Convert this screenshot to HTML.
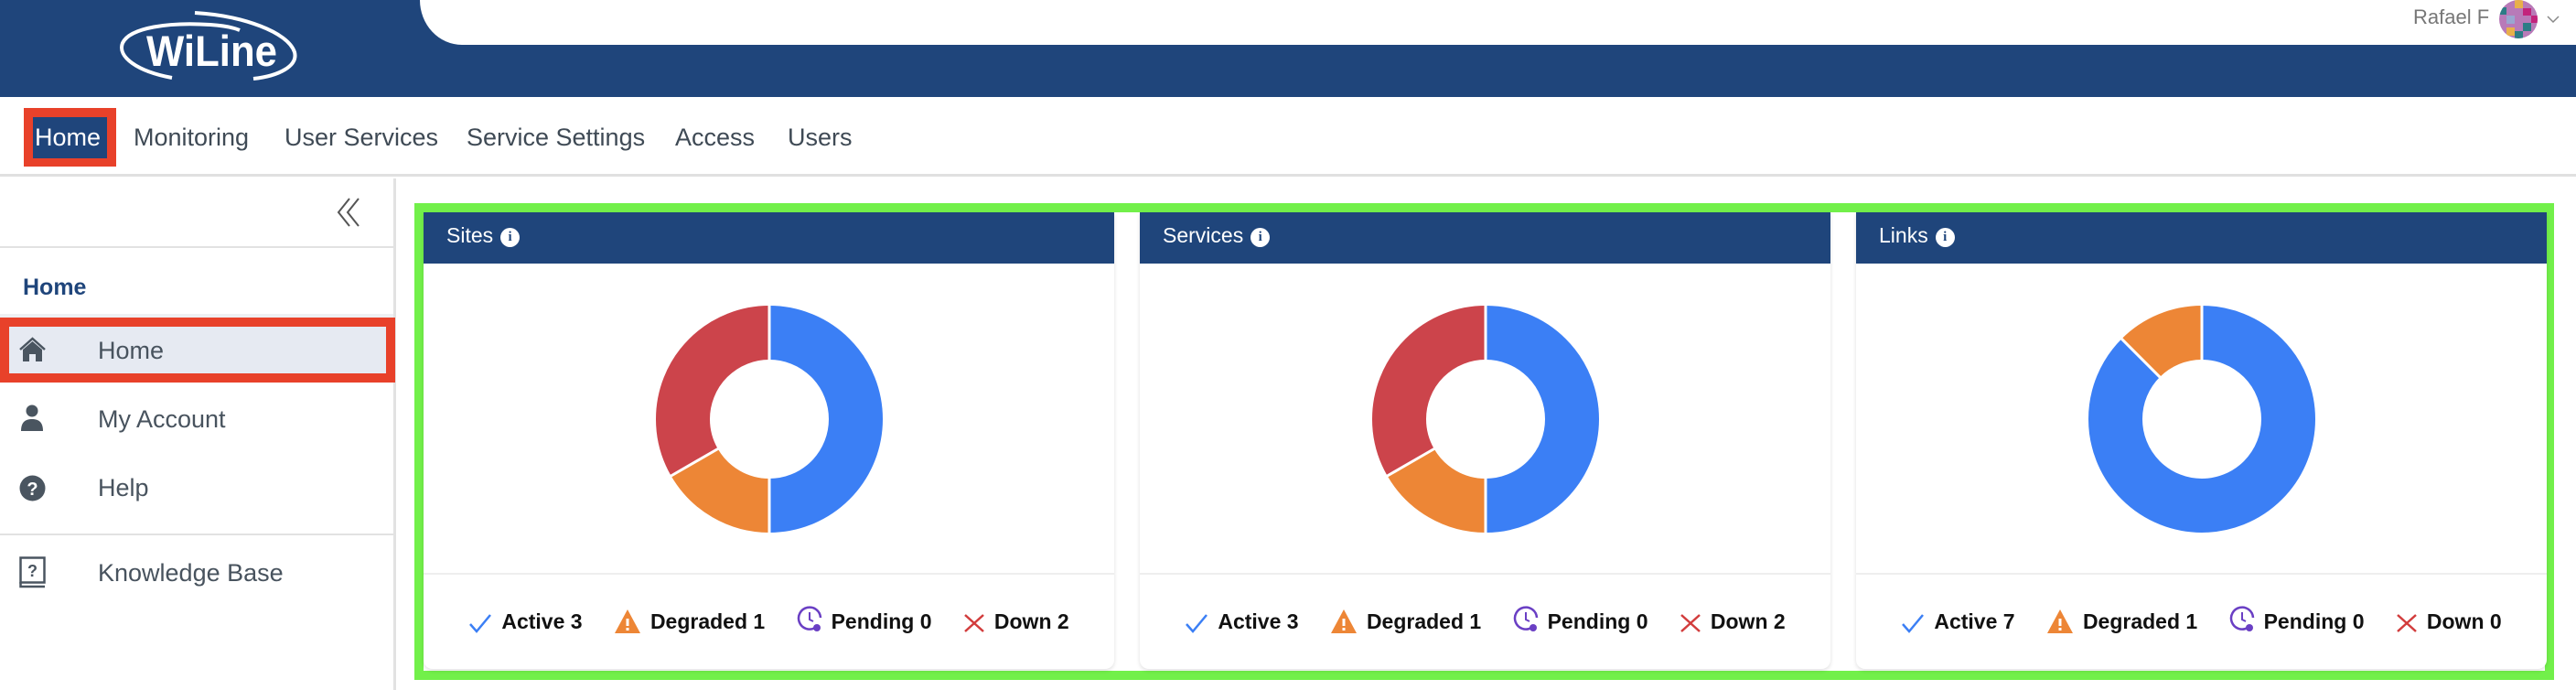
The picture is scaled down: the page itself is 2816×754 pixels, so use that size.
<!DOCTYPE html>
<html><head><meta charset="utf-8"><style>
*{margin:0;padding:0;box-sizing:border-box}
body{width:2816px;height:754px;overflow:hidden;background:#fff;font-family:"Liberation Sans",Arial,sans-serif;position:relative}
.abs{position:absolute}
.hdr{left:0;top:0;width:2816px;height:106px;background:#1f457b}
.notch{left:459px;top:0;width:2357px;height:49px;background:#fff;border-bottom-left-radius:46px 49px}
.nav{left:0;top:106px;width:2816px;height:87px;border-bottom:3px solid #e0e0e0}
.nav span{position:absolute;top:26px;font-size:27px;color:#3f4a55;line-height:36px}
.side{left:0;top:195px;width:433px;height:559px;border-right:3px solid #e2e2e2}
.si{position:absolute;left:107px;font-size:27px;color:#48535e;line-height:32px}
.card{position:absolute;top:232px;width:755px;height:499px;background:#fff;border-radius:0 0 10px 10px;box-shadow:0 2px 5px rgba(0,0,0,.12)}
.ch{height:56px;background:#1f457b;color:#fff;font-size:23px;line-height:50px;padding-left:25px}
.ch i{display:inline-block;width:21px;height:21px;border-radius:50%;background:#fff;color:#1f457b;font-style:normal;font-weight:bold;font-size:15px;line-height:21px;text-align:center;vertical-align:2px;margin-left:8px;font-family:"Liberation Serif",serif}
.dv{position:absolute;left:0;top:394px;width:755px;height:2px;background:#eee}
.lg{position:absolute;left:0;top:430px;width:755px;text-align:center;font-size:23px;font-weight:bold;color:#111;white-space:nowrap}
.lg svg{vertical-align:-5px;margin-right:10px}
.lg b{margin-right:28px}
</style></head><body>
<div class="abs hdr"></div>
<div class="abs notch"></div>
<svg class="abs" style="left:0;top:0" width="400" height="100">
<path d="M188 85 C150 78 128 62 134 47 C142 30 185 24 230 27 C245 28 255 30 262 33" fill="none" stroke="#fff" stroke-width="4"/>
<path d="M213 14 C265 17 315 35 322 57 C326 72 305 83 277 86" fill="none" stroke="#fff" stroke-width="4"/>
<text x="160" y="72" textLength="143" lengthAdjust="spacingAndGlyphs" font-family="Liberation Sans,Arial,sans-serif" font-weight="bold" font-size="47" fill="#fff">WiLine</text>
</svg>
<div class="abs" style="left:2638px;top:6px;font-size:22px;color:#777">Rafael F</div>
<svg class="abs" style="left:2731px;top:0" width="44" height="43"><defs><clipPath id="c"><circle cx="22" cy="21" r="21"/></clipPath></defs><g clip-path="url(#c)"><rect width="44" height="43" fill="#b87ab8"/><rect x="0" y="8" width="9" height="8" fill="#2c7c86"/><rect x="18" y="0" width="9" height="9" fill="#e8b04a"/><rect x="27" y="9" width="9" height="8" fill="#c2247c"/><rect x="9" y="17" width="9" height="9" fill="#9aa6d0"/><rect x="27" y="25" width="9" height="9" fill="#2c7c86"/><rect x="9" y="30" width="9" height="9" fill="#e8b04a"/><rect x="36" y="17" width="8" height="8" fill="#c2247c"/><rect x="18" y="34" width="9" height="9" fill="#2c7c86"/></g></svg>
<svg class="abs" style="left:2784px;top:16px" width="14" height="10"><path d="M1 2 L7 8 L13 2" fill="none" stroke="#888" stroke-width="1.5"/></svg>

<div class="abs nav">
<div class="abs" style="left:26px;top:12px;width:101px;height:64px;background:#e8412a"></div>
<div class="abs" style="left:36px;top:22px;width:81px;height:45px;background:#1f457b"></div>
<span style="left:38px;color:#fff">Home</span>
<span style="left:146px">Monitoring</span>
<span style="left:311px">User Services</span>
<span style="left:510px">Service Settings</span>
<span style="left:738px">Access</span>
<span style="left:861px">Users</span>
</div>

<div class="abs side">
<svg class="abs" style="left:366px;top:20px" width="30" height="34"><path d="M16 2 L4 17 L16 32 M26 2 L14 17 L26 32" fill="none" stroke="#555" stroke-width="2"/></svg>
<div class="abs" style="left:0;top:74px;width:430px;height:2px;background:#e2e2e2"></div>
<div class="abs" style="left:25px;top:105px;font-size:25px;font-weight:bold;color:#1f457b">Home</div>
<div class="abs" style="left:0;top:148px;width:430px;height:4px;background:#eef0f3"></div>
<div class="abs" style="left:0;top:152px;width:432px;height:71px;background:#e8412a"></div>
<div class="abs" style="left:10px;top:162px;width:412px;height:51px;background:#e6eaf2"></div>
<svg class="abs" style="left:20px;top:173px" width="31" height="29" viewBox="0 0 31 29"><path d="M2 14 L15.5 2 L29 14" fill="none" stroke="#4a5560" stroke-width="2.5"/><path d="M5 14 L15.5 5 L26 14 V27 H19 V19 H12 V27 H5 Z" fill="#4a5560"/></svg>
<div class="si" style="top:172px">Home</div>
<svg class="abs" style="left:22px;top:247px" width="26" height="30"><circle cx="13" cy="7" r="6.5" fill="#4a5560"/><path d="M1 29 C1 19 6 16 13 16 C20 16 25 19 25 29 Z" fill="#4a5560"/></svg>
<div class="si" style="top:247px">My Account</div>
<svg class="abs" style="left:21px;top:324px" width="29" height="29"><circle cx="14.5" cy="14.5" r="14" fill="#4a5560"/><text x="14.5" y="22" text-anchor="middle" font-family="Liberation Sans,sans-serif" font-weight="bold" font-size="20" fill="#fff">?</text></svg>
<div class="si" style="top:322px">Help</div>
<div class="abs" style="left:0;top:388px;width:430px;height:2px;background:#e2e2e2"></div>
<svg class="abs" style="left:21px;top:413px" width="30" height="35"><rect x="1.5" y="1.5" width="26" height="27" fill="none" stroke="#4a5560" stroke-width="2.5"/><path d="M1.5 28 V33 H28" fill="none" stroke="#4a5560" stroke-width="2.5"/><text x="14.5" y="22" text-anchor="middle" font-family="Liberation Sans,sans-serif" font-weight="bold" font-size="18" fill="#4a5560">?</text></svg>
<div class="si" style="top:415px">Knowledge Base</div>
</div>

<div class="abs" style="left:453px;top:222px;width:2339px;height:521px;border:10px solid #72f04a"></div>

<!-- Sites -->
<div class="card" style="left:463px">
<div class="ch">Sites<i>i</i></div>
<svg class="abs" style="left:248px;top:96px" width="260" height="260" viewBox="-130 -130 260 260">
<g transform="rotate(-90)" fill="none" stroke-width="59">
<circle r="94.5" stroke="#3b7ff5" stroke-dasharray="296.88 1000"/>
<circle r="94.5" stroke="#ed8636" stroke-dasharray="0 296.88 98.96 1000"/>
<circle r="94.5" stroke="#cc444b" stroke-dasharray="0 395.84 197.92 1000"/>
</g>
<g stroke="#fff" stroke-width="3"><line x1="0" y1="-64" x2="0" y2="-125"/><line x1="0" y1="64" x2="0" y2="125"/><line x1="-55.4" y1="32" x2="-108.3" y2="62.5"/></g>
</svg>
<div class="dv"></div>
<div class="lg">
<svg width="26" height="22"><path d="M2 12 L9 20 L24 2" fill="none" stroke="#3b7ff5" stroke-width="2.5"/></svg><b>Active 3</b>
<svg width="30" height="27"><path d="M15 1 L29 27 H1 Z" fill="#ed8636"/><rect x="13.5" y="11" width="3" height="8" fill="#fff"/><rect x="13.5" y="21" width="3" height="3" fill="#fff"/></svg><b>Degraded 1</b>
<svg width="28" height="30"><path d="M20 24 A12 12 0 1 1 26 13" fill="none" stroke="#6a3fc4" stroke-width="2.5"/><path d="M14 7 V15 L18 17" fill="none" stroke="#6a3fc4" stroke-width="2"/><circle cx="22" cy="24" r="4" fill="#6a3fc4"/></svg><b>Pending 0</b>
<svg width="24" height="22"><path d="M2 2 L22 20 M22 2 L2 20" stroke="#d23c3c" stroke-width="2.5"/></svg><b style="margin-right:0">Down 2</b>
</div>
</div>

<!-- Services -->
<div class="card" style="left:1246px">
<div class="ch">Services<i>i</i></div>
<svg class="abs" style="left:248px;top:96px" width="260" height="260" viewBox="-130 -130 260 260">
<g transform="rotate(-90)" fill="none" stroke-width="59">
<circle r="94.5" stroke="#3b7ff5" stroke-dasharray="296.88 1000"/>
<circle r="94.5" stroke="#ed8636" stroke-dasharray="0 296.88 98.96 1000"/>
<circle r="94.5" stroke="#cc444b" stroke-dasharray="0 395.84 197.92 1000"/>
</g>
<g stroke="#fff" stroke-width="3"><line x1="0" y1="-64" x2="0" y2="-125"/><line x1="0" y1="64" x2="0" y2="125"/><line x1="-55.4" y1="32" x2="-108.3" y2="62.5"/></g>
</svg>
<div class="dv"></div>
<div class="lg">
<svg width="26" height="22"><path d="M2 12 L9 20 L24 2" fill="none" stroke="#3b7ff5" stroke-width="2.5"/></svg><b>Active 3</b>
<svg width="30" height="27"><path d="M15 1 L29 27 H1 Z" fill="#ed8636"/><rect x="13.5" y="11" width="3" height="8" fill="#fff"/><rect x="13.5" y="21" width="3" height="3" fill="#fff"/></svg><b>Degraded 1</b>
<svg width="28" height="30"><path d="M20 24 A12 12 0 1 1 26 13" fill="none" stroke="#6a3fc4" stroke-width="2.5"/><path d="M14 7 V15 L18 17" fill="none" stroke="#6a3fc4" stroke-width="2"/><circle cx="22" cy="24" r="4" fill="#6a3fc4"/></svg><b>Pending 0</b>
<svg width="24" height="22"><path d="M2 2 L22 20 M22 2 L2 20" stroke="#d23c3c" stroke-width="2.5"/></svg><b style="margin-right:0">Down 2</b>
</div>
</div>

<!-- Links -->
<div class="card" style="left:2029px">
<div class="ch">Links<i>i</i></div>
<svg class="abs" style="left:248px;top:96px" width="260" height="260" viewBox="-130 -130 260 260">
<g transform="rotate(-90)" fill="none" stroke-width="59">
<circle r="94.5" stroke="#3b7ff5" stroke-dasharray="519.54 1000"/>
<circle r="94.5" stroke="#ed8636" stroke-dasharray="0 519.54 74.22 1000"/>
</g>
<g stroke="#fff" stroke-width="3"><line x1="0" y1="-64" x2="0" y2="-125"/><line x1="-45.3" y1="-45.3" x2="-88.4" y2="-88.4"/></g>
</svg>
<div class="dv"></div>
<div class="lg">
<svg width="26" height="22"><path d="M2 12 L9 20 L24 2" fill="none" stroke="#3b7ff5" stroke-width="2.5"/></svg><b>Active 7</b>
<svg width="30" height="27"><path d="M15 1 L29 27 H1 Z" fill="#ed8636"/><rect x="13.5" y="11" width="3" height="8" fill="#fff"/><rect x="13.5" y="21" width="3" height="3" fill="#fff"/></svg><b>Degraded 1</b>
<svg width="28" height="30"><path d="M20 24 A12 12 0 1 1 26 13" fill="none" stroke="#6a3fc4" stroke-width="2.5"/><path d="M14 7 V15 L18 17" fill="none" stroke="#6a3fc4" stroke-width="2"/><circle cx="22" cy="24" r="4" fill="#6a3fc4"/></svg><b>Pending 0</b>
<svg width="24" height="22"><path d="M2 2 L22 20 M22 2 L2 20" stroke="#d23c3c" stroke-width="2.5"/></svg><b style="margin-right:0">Down 0</b>
</div>
</div>
</body></html>
